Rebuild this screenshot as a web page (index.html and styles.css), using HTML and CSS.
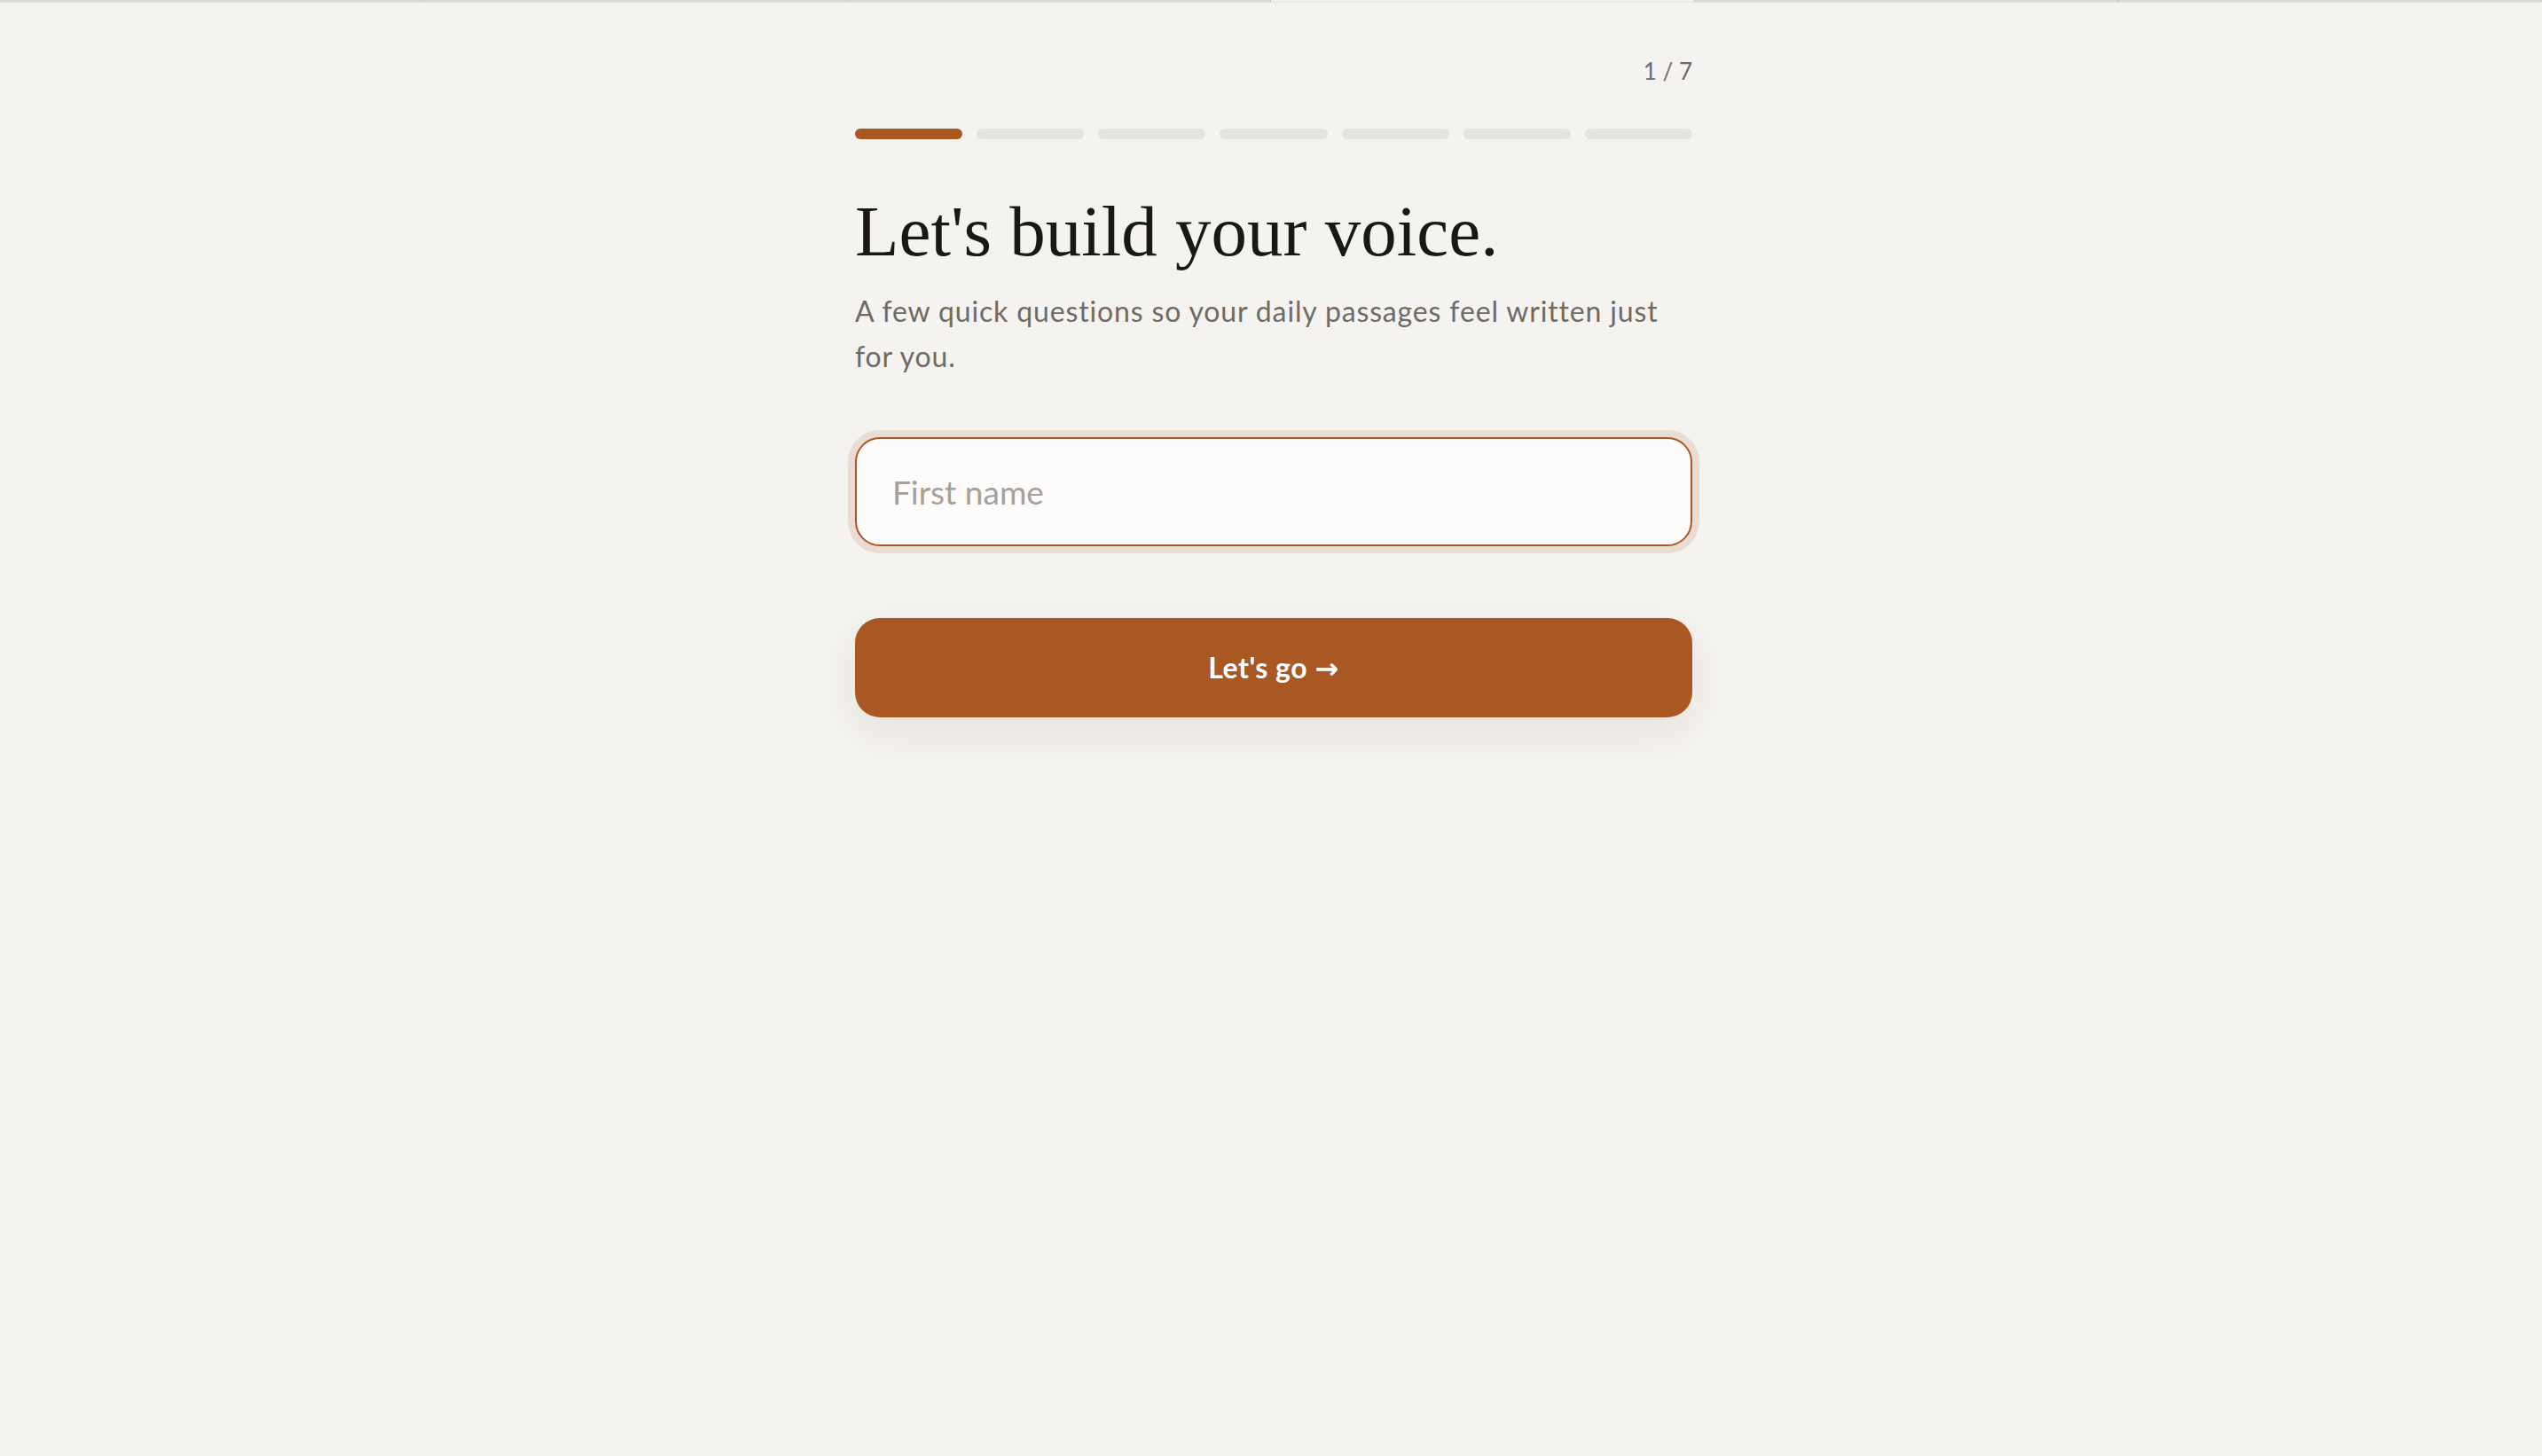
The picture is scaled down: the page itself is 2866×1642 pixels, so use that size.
FILE: index.html
```html
<!DOCTYPE html>
<html lang="en">
<head>
<meta charset="utf-8">
<title>Let's build your voice</title>
<link rel="stylesheet" href="styles.css">
</head>
<body>
<div class="tabstrip">
  <span class="tab"></span><span class="tab"></span><span class="tab"></span><span class="tab tab-active"></span><span class="tab"></span><span class="tab"></span>
</div>
<main class="wrap">
  <div class="onboard">
    <div class="counter">1 / 7</div>
    <div class="progress">
      <span class="seg seg-on"></span>
      <span class="seg"></span>
      <span class="seg"></span>
      <span class="seg"></span>
      <span class="seg"></span>
      <span class="seg"></span>
      <span class="seg"></span>
    </div>
    <h1 class="title">Let's build your voice.</h1>
    <p class="lede">A few quick questions so your daily passages feel written just for you.</p>
    <input class="field" type="text" placeholder="First name">
    <button class="cta" type="button">Let's go <span class="arrow">→</span></button>
  </div>
</main>
</body>
</html>
```
FILE: styles.css
```css
* { box-sizing: border-box; }
html, body { margin: 0; padding: 0; }
body {
  background: #f5f3ef;
  min-height: 100vh;
  font-family: "Lato", "Liberation Sans", sans-serif;
  color: #1c1a18;
}
.tabstrip {
  display: flex;
  height: 3px;
  background: #d6d6d4;
  border-bottom: 1px solid #e2e1de;
}
.tab {
  flex: 1;
  border-right: 1px solid #c4c4c2;
  background: #dadad8;
}
.tab-active { background: #f0f0ef; }
.wrap {
  width: 950px;
  margin: 0 auto;
  padding: 61px 0 0 6px;
}
.onboard {
  width: 944px;
  display: flex;
  flex-direction: column;
}
.counter {
  text-align: right;
  font-size: 26px;
  line-height: 32px;
  color: #6f6a66;
  letter-spacing: 0;
}
.progress {
  display: flex;
  gap: 16px;
  margin-top: 49px;
}
.seg {
  flex: 1;
  height: 12px;
  border-radius: 6px;
  background: #e5e3e0;
}
.seg-on { background: #a95824; }
.title {
  margin: 59px 0 0;
  font-family: "Liberation Serif", "DejaVu Serif", serif;
  font-weight: 400;
  font-size: 81px;
  line-height: 91px;
  color: #1a1816;
}
.lede {
  margin: 18px 0 0;
  font-size: 32px;
  line-height: 51px;
  letter-spacing: 0.85px;
  color: #6f6a66;
}
.field {
  margin-top: 66px;
  height: 123px;
  width: 100%;
  border: 2px solid #a95824;
  border-radius: 28px;
  background: #fdfcfa;
  padding: 0 40px;
  font-family: inherit;
  font-size: 37px;
  color: #1c1a18;
  outline: none;
  box-shadow: 0 0 0 8px rgba(169, 88, 36, 0.14);
}
.field::placeholder { color: #a5a09b; }
.cta {
  margin-top: 81px;
  height: 112px;
  width: 100%;
  border: 0;
  border-radius: 28px;
  background: #a95824;
  color: #ffffff;
  font-family: inherit;
  font-size: 32px;
  font-weight: 700;
  letter-spacing: 0.5px;
  box-shadow: 0 16px 48px rgba(60, 40, 20, 0.08);
  cursor: pointer;
}
.arrow { font-family: "DejaVu Sans", sans-serif; font-weight: 700; }
```
